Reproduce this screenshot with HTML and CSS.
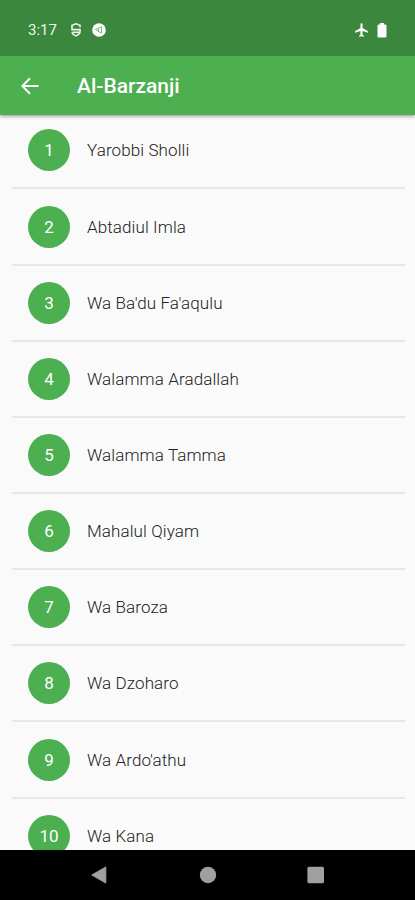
FILE: index.html
```html
<!DOCTYPE html>
<html lang="id">
<head>
<meta charset="utf-8">
<title>Al-Barzanji</title>
<link rel="stylesheet" href="styles.css">
</head>
<body>
<div class="screen">
  <header class="status">
    <span class="time">3:17</span>
    <svg class="shield" width="12" height="16" viewBox="0 0 12 16"><path d="M10 5.200V3.300L6 1.800 2 3.300v4.300h8V10c0 1.600-1.800 2.800-4 3.900C3.800 12.800 2 11.700 2 10.200M2.500 10.200H9" fill="none" stroke="#e9f5e9" stroke-width="1.600"/></svg>
    <svg class="badge" width="14" height="14" viewBox="0 0 14 14"><circle cx="7" cy="7" r="6.800" fill="#fff"/><path d="M3.500 6.500 9.500 3.800V10.200ZM6.500 5.200v3.500" fill="none" stroke="#79aa7b" stroke-width=".9"/></svg>
    <svg class="plane" width="13" height="14" viewBox="2 2 19 20"><path d="M21 16v-2l-8-5V3.500C13 2.670 12.330 2 11.500 2S10 2.670 10 3.500V9l-8 5v2l8-2.500V19l-2 1.500V22l3.500-1 3.500 1v-1.500L13 19v-5.500z" fill="#fff"/></svg>
    <svg class="battery" width="10" height="15" viewBox="0 0 10 15"><path d="M3 0h4v1.500h1.300q1.200 0 1.200 1.200v10.600q0 1.200-1.200 1.200H1.700q-1.200 0-1.200-1.200V2.700q0-1.200 1.200-1.200H3z" fill="#fff"/></svg>
  </header>
  <nav class="appbar">
    <svg width="18" height="18" viewBox="0 0 18 18"><path d="M17.500 9H1.800M9 1.300 1.300 9 9 16.700" fill="none" stroke="#fff" stroke-width="2"/></svg>
    <h1>Al-Barzanji</h1>
  </nav>
  <main class="content">
    <ul class="list">
      <li><span class="num">1</span><span class="name">Yarobbi Sholli</span></li>
      <li><span class="num">2</span><span class="name">Abtadiul Imla</span></li>
      <li><span class="num">3</span><span class="name">Wa Ba'du Fa'aqulu</span></li>
      <li><span class="num">4</span><span class="name">Walamma Aradallah</span></li>
      <li><span class="num">5</span><span class="name">Walamma Tamma</span></li>
      <li><span class="num">6</span><span class="name">Mahalul Qiyam</span></li>
      <li><span class="num">7</span><span class="name">Wa Baroza</span></li>
      <li><span class="num">8</span><span class="name">Wa Dzoharo</span></li>
      <li><span class="num">9</span><span class="name">Wa Ardo'athu</span></li>
      <li><span class="num">10</span><span class="name">Wa Kana</span></li>
    </ul>
  </main>
  <footer class="sysnav">
    <svg width="18" height="20" viewBox="0 0 18 20"><path d="M14.800 2v16L.8 10z" fill="#a0a0a0" stroke="#a0a0a0" stroke-linejoin="round"/></svg>
    <svg width="18" height="18" viewBox="0 0 18 18"><circle cx="9" cy="9" r="8.200" fill="#a0a0a0"/></svg>
    <svg width="18" height="18" viewBox="0 0 18 18"><rect x=".4" y=".7" width="16.600" height="16.600" rx="1.500" fill="#a0a0a0"/></svg>
  </footer>
</div>
</body>
</html>
```

FILE: styles.css
```css
* { box-sizing: border-box; }
body { margin: 0; font-family: Roboto, "Liberation Sans", sans-serif; background: #fafafa; }
svg { display: block; flex: none; }
.screen { display: flex; flex-direction: column; width: 415px; height: 900px; overflow: hidden; }
.status { display: flex; align-items: center; height: 56px; padding: 4px 28px 0; background: #3c873e; flex: none; z-index: 2; }
.time { width: 42px; font-size: 15px; color: #e9f5e9; }
.badge { margin-left: 10px; }
.plane { margin-left: auto; }
.battery { margin-left: 9px; }
.appbar { display: flex; align-items: center; height: 59px; padding: 1px 21px 0; gap: 38px; background: #4caf50; box-shadow: 0 1px 4px rgba(0,0,0,.45); flex: none; z-index: 1; }
.appbar h1 { margin: 0; font-size: 21px; font-weight: 500; color: #fff; }
.content { flex: 1; min-height: 0; overflow: hidden; }
.list { list-style: none; margin: -1.700px 10px 0 12px; padding: 0; }
.list li { display: flex; align-items: center; height: 76.150px; padding: 0 16px; gap: 17px; border-bottom: 2px solid #e7e7e7; }
.num { display: flex; align-items: center; justify-content: center; width: 42px; height: 42px; border-radius: 50%; background: #4caf50; color: #fff; font-size: 17px; font-weight: 400; flex: none; }
.name { font-size: 17px; font-weight: 300; letter-spacing: .1px; color: #222; white-space: nowrap; }
.sysnav { display: flex; align-items: center; justify-content: center; gap: 90px; height: 50px; background: #000; flex: none; }
```
